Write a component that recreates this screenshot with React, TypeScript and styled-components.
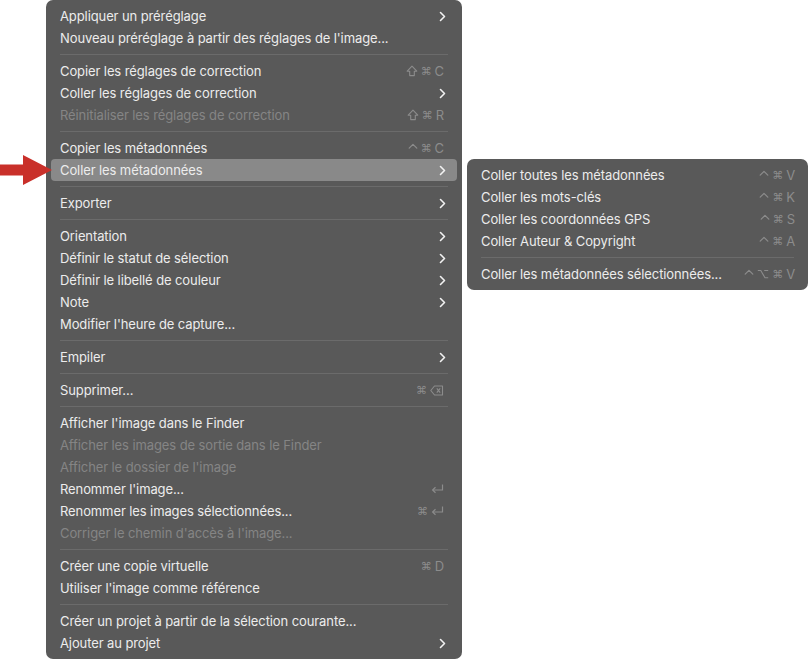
import React from "react";
import styled, { createGlobalStyle } from "styled-components";

const GlobalStyle = createGlobalStyle`
  html, body {
    margin: 0;
    padding: 0;
    background: #ffffff;
  }
  body {
    font-family: Inter, "Noto Sans", "Liberation Sans", sans-serif;
    -webkit-font-smoothing: antialiased;
  }
`;

const KEY = "#8c8c8c";

const Page = styled.div`
  width: 808px;
  height: 659px;
  padding-left: 46px;
  box-sizing: border-box;
  overflow: hidden;
`;

const Keys = styled.span`
  display: flex;
  align-items: center;
  gap: 3px;
  color: ${KEY};
  font-size: 13px;
  margin-right: 2px;
`;

const Menu = styled.div<{ $width: number }>`
  position: relative;
  width: ${p => p.$width}px;
  box-sizing: border-box;
  padding: 5px 0;
  background: #595959;
  border-radius: 7px;
  color: #e8e8e8;
  font-size: 13px;
  letter-spacing: -0.1px;
`;

const SubMenu = styled(Menu)`
  position: absolute;
  top: 0;
  left: calc(100% + 10px);
  z-index: 2;

  ${Keys} {
    margin-right: -3px;
  }
`;

const Row = styled.div<{ $active?: boolean; $disabled?: boolean }>`
  position: relative;
  height: 22px;
  margin: 0 5px;
  padding: 0 11px 0 9px;
  display: flex;
  align-items: center;
  border-radius: 4px;
  background: ${p => (p.$active ? "#898989" : "transparent")};
  color: ${p => (p.$disabled ? "#858585" : "#ececec")};
`;

const Label = styled.span`
  flex: 1;
  white-space: nowrap;
`;

const Cmd = styled.span`
  font-family: "DejaVu Sans", sans-serif;
  font-size: 11px;
`;

const Sep = styled.div`
  height: 1px;
  margin: 5px 14px;
  background: #6b6b6b;
`;

const Pointer = styled.svg`
  position: absolute;
  left: -51px;
  top: -4px;
`;

const Chevron = () => (
  <svg width="7" height="11" viewBox="0 0 7 11">
    <path d="M1.5 1.5 L5.5 5.5 L1.5 9.5" fill="none" stroke="#f2f2f2" strokeWidth="1.6" strokeLinecap="round" strokeLinejoin="round" />
  </svg>
);

const ShiftIcon = () => (
  <svg width="12" height="12" viewBox="0 0 12 12">
    <path d="M6 1.2 L10.8 6.2 H8.3 V10.6 H3.7 V6.2 H1.2 Z" fill="none" stroke={KEY} strokeWidth="1.1" strokeLinejoin="round" />
  </svg>
);

const CtrlIcon = () => (
  <svg width="10" height="12" viewBox="0 0 10 12">
    <path d="M1.2 6.2 L5 2.4 L8.8 6.2" fill="none" stroke={KEY} strokeWidth="1.2" strokeLinecap="round" strokeLinejoin="round" />
  </svg>
);

const OptIcon = () => (
  <svg width="12" height="12" viewBox="0 0 12 12">
    <path d="M0.8 2.5 H3.8 L8 9.8 H11.2 M7.2 2.5 H11.2" fill="none" stroke={KEY} strokeWidth="1.1" />
  </svg>
);

const ReturnIcon = () => (
  <svg width="13" height="10" viewBox="0 0 13 10">
    <path d="M11.5 0.5 V6 H2" fill="none" stroke={KEY} strokeWidth="1.2" />
    <path d="M4.5 3.3 L1.6 6 L4.5 8.7" fill="none" stroke={KEY} strokeWidth="1.2" />
  </svg>
);

const DeleteIcon = () => (
  <svg width="14" height="11" viewBox="0 0 14 11">
    <path d="M4.5 1 H12.5 V10 H4.5 L0.8 5.5 Z" fill="none" stroke={KEY} strokeWidth="1.1" strokeLinejoin="round" />
    <path d="M6.8 3.3 L10.2 7.7 M10.2 3.3 L6.8 7.7" stroke={KEY} strokeWidth="1.1" />
  </svg>
);

type Item = {
  label: string;
  keys?: React.ReactNode;
  sub?: boolean;
  disabled?: boolean;
  active?: boolean;
};

const glyphs: Record<string, React.ReactNode> = {
  shift: <ShiftIcon />,
  ctrl: <CtrlIcon />,
  opt: <OptIcon />,
  cmd: <Cmd>⌘</Cmd>,
  ret: <ReturnIcon />,
  del: <DeleteIcon />
};

const k = (...parts: string[]) => (
  <Keys>
    {parts.map((p, i) => (
      <React.Fragment key={i}>{glyphs[p] ?? <span>{p}</span>}</React.Fragment>
    ))}
  </Keys>
);

const mainGroups: Item[][] = [
  [
    { label: "Appliquer un préréglage", sub: true },
    { label: "Nouveau préréglage à partir des réglages de l'image..." }
  ],
  [
    { label: "Copier les réglages de correction", keys: k("shift", "cmd", "C") },
    { label: "Coller les réglages de correction", sub: true },
    { label: "Réinitialiser les réglages de correction", disabled: true, keys: k("shift", "cmd", "R") }
  ],
  [
    { label: "Copier les métadonnées", keys: k("ctrl", "cmd", "C") },
    { label: "Coller les métadonnées", sub: true, active: true }
  ],
  [{ label: "Exporter", sub: true }],
  [
    { label: "Orientation", sub: true },
    { label: "Définir le statut de sélection", sub: true },
    { label: "Définir le libellé de couleur", sub: true },
    { label: "Note", sub: true },
    { label: "Modifier l'heure de capture..." }
  ],
  [{ label: "Empiler", sub: true }],
  [{ label: "Supprimer...", keys: k("cmd", "del") }],
  [
    { label: "Afficher l'image dans le Finder" },
    { label: "Afficher les images de sortie dans le Finder", disabled: true },
    { label: "Afficher le dossier de l'image", disabled: true },
    { label: "Renommer l'image...", keys: k("ret") },
    { label: "Renommer les images sélectionnées...", keys: k("cmd", "ret") },
    { label: "Corriger le chemin d'accès à l'image...", disabled: true }
  ],
  [
    { label: "Créer une copie virtuelle", keys: k("cmd", "D") },
    { label: "Utiliser l'image comme référence" }
  ],
  [
    { label: "Créer un projet à partir de la sélection courante..." },
    { label: "Ajouter au projet", sub: true }
  ]
];

const subGroups: Item[][] = [
  [
    { label: "Coller toutes les métadonnées", keys: k("ctrl", "cmd", "V") },
    { label: "Coller les mots-clés", keys: k("ctrl", "cmd", "K") },
    { label: "Coller les coordonnées GPS", keys: k("ctrl", "cmd", "S") },
    { label: "Coller Auteur & Copyright", keys: k("ctrl", "cmd", "A") }
  ],
  [{ label: "Coller les métadonnées sélectionnées...", keys: k("ctrl", "opt", "cmd", "V") }]
];

const ItemRow = ({ item, children }: { item: Item; children?: React.ReactNode }) => (
  <Row $active={item.active} $disabled={item.disabled}>
    <Label>{item.label}</Label>
    {item.keys}
    {item.sub && <Chevron />}
    {children}
  </Row>
);

const Groups = ({ groups, extra }: { groups: Item[][]; extra?: React.ReactNode }) => (
  <>
    {groups.map((g, gi) => (
      <React.Fragment key={gi}>
        {gi > 0 && <Sep />}
        {g.map(item => (
          <ItemRow key={item.label} item={item}>
            {item.active && extra}
          </ItemRow>
        ))}
      </React.Fragment>
    ))}
  </>
);

export default function App() {
  const submenu = (
    <>
      <Pointer width="52" height="30" viewBox="0 0 52 30">
        <path d="M0 9.5 H23 V0 L52 15 L23 30 V20.5 H0 Z" fill="#c9302a" />
      </Pointer>
      <SubMenu $width={341}>
        <Groups groups={subGroups} />
      </SubMenu>
    </>
  );
  return (
    <Page>
      <GlobalStyle />
      <Menu $width={416}>
        <Groups groups={mainGroups} extra={submenu} />
      </Menu>
    </Page>
  );
}
